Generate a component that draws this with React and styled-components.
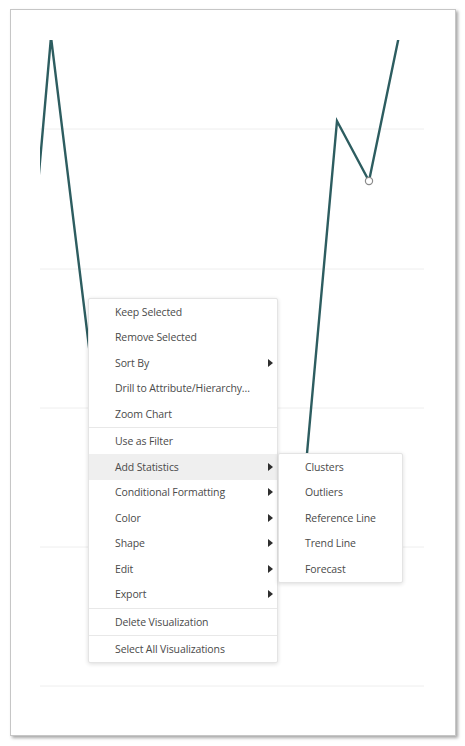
import React from "react";
import styled, { createGlobalStyle } from "styled-components";

const Global = createGlobalStyle`
  html, body { margin: 0; padding: 0; background: #ffffff; }
  body { font-family: "Open Sans", "Noto Sans", sans-serif; }
`;

const Page = styled.div`
  width: 465px;
  height: 746px;
  padding: 9px 9px 10px 10px;
  box-sizing: border-box;
  background: #ffffff;
`;

const Frame = styled.div`
  position: relative;
  width: 446px;
  height: 727px;
  box-sizing: border-box;
  border: 1px solid #c6c6c6;
  box-shadow: 2px 2px 3px rgba(0, 0, 0, 0.35);
  background: #ffffff;
  overflow: hidden;
`;

const ChartSvg = styled.svg`
  display: block;
  width: 444px;
  height: 725px;
`;

const Menu = styled.div`
  position: absolute;
  left: ${(p) => p.$left}px;
  top: ${(p) => p.$top}px;
  width: ${(p) => p.$width}px;
  box-sizing: border-box;
  background: #ffffff;
  border: 1px solid #e4e4e4;
  border-radius: 2px;
  box-shadow: 0 1px 4px rgba(0, 0, 0, 0.14);
  display: flex;
  flex-direction: column;
  z-index: ${(p) => p.$z || 1};
`;

const Item = styled.div`
  position: relative;
  height: 25.5px;
  display: flex;
  align-items: center;
  padding: 0 4px 0 26px;
  font-size: 10.5px;
  letter-spacing: -0.12px;
  color: #4a4a4a;
  background: ${(p) => (p.$active ? "#efefef" : "transparent")};
  white-space: nowrap;
`;

const Label = styled.span`
  flex: 1;
`;

const Arrow = styled.span`
  width: 0;
  height: 0;
  border-left: 5px solid #2e2e2e;
  border-top: 4px solid transparent;
  border-bottom: 4px solid transparent;
`;

const Separator = styled.div`
  height: 1px;
  margin: 0.5px 0;
  background: #e8e8e8;
`;

const SubMenu = styled(Menu)`
  left: 100%;
  top: -1px;
  margin-left: 1px;
`;

const gridYs = [129, 269, 408, 547, 686];

function Chart() {
  const pts = [
    [36, 207],
    [51, 37],
    [120, 600],
    [250, 520],
    [301, 520],
    [337, 121],
    [369, 181],
    [399, 36],
  ];
  const d = pts.map((p, i) => `${i ? "L" : "M"}${p[0]} ${p[1]}`).join(" ");
  return (
    <ChartSvg viewBox="0 0 444 725">
      <defs>
        <clipPath id="plot">
          <rect x="40" y="40" width="384" height="660" />
        </clipPath>
      </defs>
      <g transform="translate(-11,-10)">
        {gridYs.map((y) => (
          <line key={y} x1="40" x2="424" y1={y} y2={y} stroke="#eeeeee" strokeWidth="1" />
        ))}
        <g clipPath="url(#plot)">
          <path d={d} fill="none" stroke="#2d5d60" strokeWidth="2.4" strokeLinejoin="miter" />
        </g>
        <circle cx="369" cy="181" r="3.6" fill="#ffffff" stroke="#8a8a8a" strokeWidth="1.2" />
      </g>
    </ChartSvg>
  );
}

const groups = [
  [
    { t: "Keep Selected" },
    { t: "Remove Selected" },
    { t: "Sort By", sub: true },
    { t: "Drill to Attribute/Hierarchy..." },
    { t: "Zoom Chart" },
  ],
  [
    { t: "Use as Filter" },
    { t: "Add Statistics", sub: true, active: true },
    { t: "Conditional Formatting", sub: true },
    { t: "Color", sub: true },
    { t: "Shape", sub: true },
    { t: "Edit", sub: true },
    { t: "Export", sub: true },
  ],
  [{ t: "Delete Visualization" }],
  [{ t: "Select All Visualizations" }],
];

const stats = ["Clusters", "Outliers", "Reference Line", "Trend Line", "Forecast"];

export default function App() {
  return (
    <>
      <Global />
      <Page>
        <Frame>
          <Chart />
          <Menu $left={77} $top={288} $width={190} $z={2}>
            {groups.map((g, gi) => (
              <React.Fragment key={gi}>
                {gi > 0 && <Separator />}
                {g.map((it) => (
                  <Item key={it.t} $active={it.active}>
                    <Label>{it.t}</Label>
                    {it.sub && <Arrow />}
                    {it.active && (
                      <SubMenu $width={125} $z={3}>
                        {stats.map((s) => (
                          <Item key={s}>
                            <Label>{s}</Label>
                          </Item>
                        ))}
                      </SubMenu>
                    )}
                  </Item>
                ))}
              </React.Fragment>
            ))}
          </Menu>
        </Frame>
      </Page>
    </>
  );
}
